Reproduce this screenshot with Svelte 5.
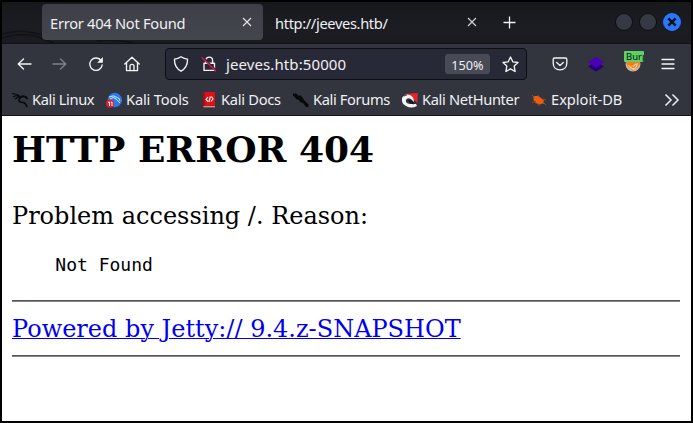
<script>
  const bookmarks = [
    { label: 'Kali Linux', icon: 'dragon', width: 94, spacing: -0.38 },
    { label: 'Kali Tools', icon: 'tools', width: 95, spacing: -0.17 },
    { label: 'Kali Docs', icon: 'docs', width: 92, spacing: -0.27 },
    { label: 'Kali Forums', icon: 'forums', width: 109, spacing: -0.36 },
    { label: 'Kali NetHunter', icon: 'hunter', width: 129, spacing: -0.34 },
    { label: 'Exploit-DB', icon: 'bug', width: 100, spacing: -0.02 }
  ];
</script>

<div class="window">
  <header class="tabs">
    <svg class="wallpaper" width="140" height="41" viewBox="0 0 140 41" fill="none" stroke="#111216"><path d="M0 32Q22 25 48 36M0 36Q22 29 43 37M38 36L52 41M95 39Q110 37 132 41" stroke-width="1.5" /></svg>
    <div class="tab active">
      <span class="title first">Error 404 Not Found</span>
      <svg width="10" height="10" viewBox="0 0 10 10" stroke="#e5e5e7" stroke-width="1.1"><path d="M1 1L9 9M9 1L1 9" /></svg>
    </div>
    <div class="tab second">
      <span class="title">http://jeeves.htb/</span>
      <svg width="10" height="10" viewBox="0 0 10 10" stroke="#d5d5d9" stroke-width="1.1"><path d="M1 1L9 9M9 1L1 9" /></svg>
    </div>
    <svg class="plus" width="13" height="13" viewBox="0 0 13 13" stroke="#f0f0f2" stroke-width="1.3"><path d="M6.5 .5V12.5M.5 6.5H12.5" /></svg>
    <div class="controls">
      <span class="control"></span>
      <span class="control"></span>
      <span class="control close"><svg width="10" height="10" viewBox="0 0 10 10" stroke="#10131b" stroke-width="2.5"><path d="M1.3 1.3L8.7 8.7M8.7 1.3L1.3 8.7" /></svg></span>
    </div>
  </header>

  <div class="toolbar">
    <div class="nav">
      <svg width="16" height="16" viewBox="0 0 16 16"><path d="M7.5 3L2.2 8L7.5 13M2.2 8H15" /></svg>
      <svg class="disabled" width="16" height="16" viewBox="0 0 16 16"><path d="M8.5 3L13.8 8L8.5 13M13.8 8H1" /></svg>
      <svg width="16" height="16" viewBox="0 0 16 16"><path d="M13.2 4.7A6.2 6.2 0 1 0 14.2 9" /><path d="M14.9 1V6.8H9.1Z" fill="#f4f4f6" stroke="none" /></svg>
      <svg width="16" height="16" viewBox="0 0 16 16"><path d="M.8 8L8 1.3L15.2 8M2.5 7V14.6H13.5V7M6 14.5V10.3A2 2 0 0 1 10 10.3V14.5" /></svg>
    </div>
    <div class="address">
      <svg class="shield" width="16" height="16" viewBox="0 0 16 16"><path d="M8 .8Q11 3 14.5 3.1C14.7 8.7 12.5 12.8 8 15.2C3.5 12.8 1.3 8.7 1.5 3.1Q5 3 8 .8Z" /></svg>
      <svg class="lock" width="16" height="16" viewBox="0 0 16 16"><path d="M4.8 7V4.5A3.4 3.4 0 0 1 11.6 4.5V7M3 7.2H13.5V14.4H3Z" /><path class="gap" d="M2.5 1.5L15 14" /><path class="slash" d="M1 1.5L14.5 15" /></svg>
      <span class="url">jeeves.htb:50000</span>
      <span class="zoom">150%</span>
      <svg class="star" width="17" height="17" viewBox="0 0 17 17"><path d="M8.5 1L10.8 5.8L16 6.5L12.2 10.1L13.1 15.5L8.5 12.9L3.9 15.5L4.8 10.1L1 6.5L6.2 5.8Z" /></svg>
    </div>
    <svg class="pocket" width="16" height="16" viewBox="0 0 16 16"><path d="M2.5 2H13.5Q14.8 2 14.8 3.3V7.2C14.8 11.1 12 13.8 8 13.8S1.2 11.1 1.2 7.2V3.3Q1.2 2 2.5 2ZM4.7 6.5L8 9.5L11.3 6.5" /></svg>
    <svg class="layers" width="16" height="16" viewBox="0 0 16 16" stroke="none"><path d="M0 10.5L8 5L16 10.5L8 15.8Z" fill="#260078" /><path d="M0 6.2L8 .8L16 6.2L8 12Z" fill="#4b00b5" /></svg>
    <div class="foxy">
      <svg width="16" height="16" viewBox="0 0 16 16" stroke="none"><circle cx="8" cy="8" r="7.5" fill="#cbbba5" /><path d="M1 7Q3 2 8 2Q14 2 15 8L12 12L8 15Q4 13 1 7Z" fill="#ee801c" /><path d="M3 9L7 11L10 8L13 7Q12 13 8 14Q5 13 3 9Z" fill="#f4d0a2" /><path d="M4 8L8 11L12 8L10 12L7 12Z" fill="#e68b31" /></svg>
      <span>Burp</span>
    </div>
    <svg class="menu" width="14" height="14" viewBox="0 0 14 14"><path d="M1 2.5H13M1 7H13M1 11.5H13" /></svg>
  </div>

  <nav class="bookmarks">
    {#each bookmarks as item}
      <a class="bookmark" style="width: {item.width}px; letter-spacing: {item.spacing}px" href="#top">
        <svg width="16" height="16" viewBox="0 0 16 16" stroke="none">
          {#if item.icon === 'dragon'}
            <g fill="none" stroke="#07080a"><path d="M0 1.5Q6 2 9 5M1 5Q5 2.5 9 5M3 7Q6 4.5 9 5" stroke-width="1.1" /><path d="M8 5Q14 3 15.5 7.2M9 5Q5 9 9 10.3Q14 10.2 14.8 15" stroke-width="1.6" /><path d="M10 3.3L12 5M12 4L15 6" /></g>
          {:else if item.icon === 'tools'}
            <circle cx="8.8" cy="8" r="7.2" fill="#297de5" />
            <path d="M3 5Q8 2.5 11 5.5Q14 6 14 9M4 7Q8 4 10 7Q12 9 14 11" fill="none" stroke="#eaf4ff" stroke-width=".9" />
            <circle cx="4" cy="11.8" r="4" fill="#ed1824" /><path d="M2 10.5L3.5 10V14M4.7 10.5L6 10V14" fill="none" stroke="#fff" stroke-width="1" />
          {:else if item.icon === 'docs'}
            <path d="M2 0H14V15H2Z" fill="#dc1118" /><path d="M2 0H4V14H2Z" fill="#ad0c13" /><path d="M2.5 14.8H14" stroke="#d2b8b6" stroke-width="1" /><path d="M7 5L5 7.5L7 9.5M10.5 4.5L12 7L10 9.5M9.4 4.5L7.9 10" fill="none" stroke="#fff" stroke-width="1.1" />
          {:else if item.icon === 'forums'}
            <path d="M0 1L2 2L2.5 1L6 4L7 3L10 6L11 8L14 11L16 13L15 14L16 15L13 15L10 11L7 10L6 8L3 7L2 5L0 4Z" fill="#08090b" />
          {:else if item.icon === 'hunter'}
            <path d="M3 2L15.5 1V11L11 7Z" fill="#ed222d" /><path d="M0 6Q3 1 8 3Q12 5 12 10L9 7Q5 5 4 8Q3 11 8 12L14 12L15 14Q9 17 4 14Q-1 12 0 6Z" fill="#f4f3f5" /><path d="M2 4L5 3M6 8L10 9L12 12L8 11Z" fill="#17191e" stroke="#17191e" stroke-width=".7" />
          {:else}
            <path d="M2 5L4 4L7 4L10 6L13 8.5L12 10.5L14 12L11 11.5L9 12.5L6 11.5L4 11L5 9.5L2 8L3 7Z" fill="#ed5c11" /><path d="M1 3L4 6M1 10.5L5 9M7 3L8 5M12 7L15 8M7 11L8 14M12 10L15 13" fill="none" stroke="#c94f17" stroke-width=".7" />
          {/if}
        </svg>
        <span>{item.label}</span>
      </a>
    {/each}
    <svg class="more" width="16" height="14" viewBox="0 0 16 14" fill="none" stroke="#eeeef2" stroke-width="1.5"><path d="M1.5 1.5L7 7L1.5 12.5M8.5 1.5L14 7L8.5 12.5" /></svg>
  </nav>

  <main>
    <h1>HTTP ERROR 404</h1>
    <p>Problem accessing /. Reason:</p>
    <pre>    Not Found</pre>
    <hr />
    <a href="#top">Powered by Jetty:// 9.4.z-SNAPSHOT</a>
    <hr />
  </main>
</div>

<style>
  :global(body) { margin: 0; }
  .window { box-sizing: border-box; width: 693px; height: 423px; border: 2px solid #000; background: #fff; display: flex; flex-direction: column; overflow: hidden; font-family: "Noto Sans", sans-serif; font-size: 14.67px; color: #f0f0f4; }
  svg { flex: none; display: block; }
  .tabs { flex: none; box-sizing: border-box; height: 42px; padding: 2px 10px 3px 40px; display: flex; align-items: center; position: relative; background: linear-gradient(#17181c, #1c1d22 60%, #1a1b20); border-bottom: 1px solid #101115; }
  .wallpaper { position: absolute; left: 0; top: 0; }
  .tab { box-sizing: border-box; display: flex; justify-content: space-between; align-items: center; height: 36px; padding: 0 11px 1px 8px; }
  .active { width: 221px; background: linear-gradient(#3e3f46, #44464e); border-radius: 4px; z-index: 1; }
  .second { width: 225px; padding-left: 12px; }
  .title { white-space: nowrap; line-height: 20px; letter-spacing: -.36px; padding-top: 2px; }
  .first { letter-spacing: -.27px; }
  .plus { margin-left: 15px; }
  .controls { margin-left: auto; display: flex; gap: 6px; }
  .control { box-sizing: border-box; width: 18px; height: 18px; border: 1px solid #0c0d12; border-radius: 50%; background: #343945; display: flex; align-items: center; justify-content: center; }
  .close { background: #2777ff; border-color: #2777ff; }
  .toolbar { flex: none; box-sizing: border-box; height: 41px; background: #33353e; display: flex; align-items: center; padding: 0 0 1px 14px; }
  .toolbar svg { fill: none; stroke: #f4f4f6; stroke-width: 1.35; stroke-linecap: round; stroke-linejoin: round; }
  .nav { display: flex; gap: 20px; width: 149px; }
  .nav .disabled { opacity: .4; }
  .address { box-sizing: border-box; width: 362px; height: 32px; border: 1px solid #0d0e13; border-radius: 4px; background: #282936; display: flex; align-items: center; padding: 0 7px; }
  .lock { margin-left: 12px; }
  .toolbar .lock .gap { stroke: #282936; stroke-width: 1.4; }
  .toolbar .lock .slash { stroke: #f00b50; stroke-width: 1.3; }
  .url { margin-left: 9px; flex: 1; line-height: 20px; font-size: 15px; letter-spacing: .1px; }
  .zoom { box-sizing: border-box; width: 45px; height: 20px; background: #484a55; border-radius: 3px; text-align: center; font-size: 12.7px; line-height: 22px; margin-right: 12px; }
  .pocket { margin-left: 25px; }
  .toolbar .layers, .toolbar .foxy svg { stroke: none; }
  .layers { margin-left: 20px; }
  .foxy { position: relative; width: 20px; height: 24px; margin-left: 20px; display: flex; align-items: center; justify-content: center; }
  .foxy svg { margin-right: 3px; }
  .foxy span { position: absolute; left: 0; top: -1px; width: 20px; height: 11px; overflow: hidden; background: #61cf68; color: #07190a; border-radius: 1px; font-size: 9.5px; line-height: 11px; padding-left: 2px; box-sizing: border-box; }
  .menu { margin-left: 17px; }
  .bookmarks { flex: none; box-sizing: border-box; height: 31px; padding: 0 0 1px 10px; background: #33353e; border-bottom: 1px solid #121218; display: flex; align-items: center; }
  .bookmark { flex: none; display: flex; align-items: center; gap: 4px; color: #eff0f4; text-decoration: none; line-height: 20px; white-space: nowrap; font-size: 14.67px; }
  .bookmark span { padding-bottom: 2px; }
  .more { margin-left: 33px; }
  main { flex: 1; padding: 12px 11px 0 10px; color: #000; font-family: "DejaVu Serif", serif; font-size: 24px; line-height: 28px; }
  h1 { margin: 0; font-size: 36px; line-height: 42px; }
  p { margin: 32px 0 0; }
  pre { margin: 24px 0 0; font-family: "DejaVu Sans Mono", monospace; font-size: 18px; line-height: 21px; }
  hr { border: 0; height: 2px; margin: 25px 0 13px; background: linear-gradient(#555 50%, #858585 50%); }
  main > a { display: block; width: max-content; color: #00e; text-decoration: underline; text-decoration-thickness: 1px; }
  main > a + hr { margin: 12px 0 0; }
</style>
